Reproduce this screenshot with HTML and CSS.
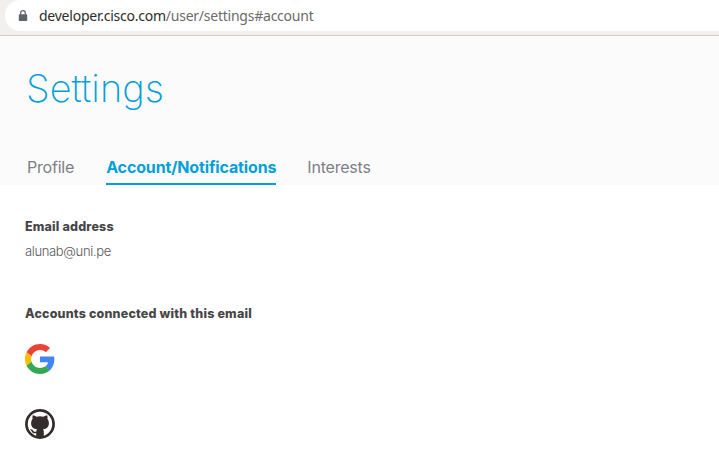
FILE: index.html
```html
<!DOCTYPE html>
<html lang="en">
<head>
<meta charset="utf-8">
<title>Settings</title>
<link rel="stylesheet" href="styles.css">
</head>
<body>
<div class="toolbar">
  <div class="address">
    <svg class="lock" width="10" height="12" viewBox="0 0 10 12"><path d="M1.5 4.3h7q.7 0 .7.7v5.3q0 .7-.7.7h-7q-.7 0-.7-.7V5q0-.7.7-.7z" fill="#5f6368"/><path d="M2.7 4.8V3a2.3 2.3 0 0 1 4.6 0v1.8" fill="none" stroke="#5f6368" stroke-width="1.2"/></svg>
    <span class="url"><span class="host">developer.cisco.com</span>/user/settings#account</span>
  </div>
</div>
<header class="header">
  <h1 class="title">Settings</h1>
  <nav class="tabs">
    <a class="tab">Profile</a>
    <a class="tab active">Account/Notifications</a>
    <a class="tab">Interests</a>
  </nav>
</header>
<main class="content">
  <h2 class="label">Email address</h2>
  <p class="email">alunab@uni.pe</p>
  <h2 class="label accounts-label">Accounts connected with this email</h2>
  <div class="accounts">
    <svg width="30" height="30" viewBox="0 0 48 48"><path fill="#EA4335" d="M24 9.5c3.54 0 6.71 1.22 9.21 3.6l6.85-6.85C35.9 2.38 30.47 0 24 0 14.62 0 6.51 5.38 2.56 13.22l7.98 6.19C12.43 13.72 17.74 9.5 24 9.5z"/><path fill="#4285F4" d="M46.98 24.55c0-1.57-.15-3.09-.38-4.55H24v9.02h12.94c-.58 2.96-2.26 5.48-4.78 7.18l7.73 6c4.51-4.18 7.09-10.36 7.09-17.65z"/><path fill="#FBBC05" d="M10.53 28.59A14.5 14.5 0 0 1 9.77 24c0-1.6.27-3.14.76-4.59l-7.98-6.19A24 24 0 0 0 0 24c0 3.88.92 7.54 2.56 10.78z"/><path fill="#34A853" d="M24 48c6.48 0 11.93-2.13 15.89-5.81l-7.73-6c-2.15 1.45-4.92 2.3-8.16 2.3-6.26 0-11.57-4.22-13.47-9.91l-7.98 6.19C6.51 42.62 14.62 48 24 48z"/></svg>
    <svg width="30" height="30" viewBox="0 0 30 30"><circle cx="15" cy="15" r="13.6" fill="#fff" stroke="#332d2d" stroke-width="2.7"/><path fill="#332d2d" d="M7.8 6.2q1.5-.1 3.900 1.500Q15 7 18.300 7.700q2.400-1.600 3.900-1.500.7 1.900.2 3.500 1.500 1.700 1.500 4.200c0 4.200-2.200 5.800-5.900 6.300q.8.900.8 2.600v5.500h-7.600v-4.200c-3 .6-3.900-.5-4.600-1.900-.4-.8-1-1.300-1.600-1.700 1.700-.5 2.700.4 3.400 1.400.7 1 1.700 1.100 2.900.7q.1-1.700.7-2.400c-3.700-.5-5.900-2.100-5.900-6.300q0-2.500 1.500-4.200-.5-1.600.2-3.500z"/></svg>
  </div>
</main>
</body>
</html>
```
FILE: styles.css
```css
* { box-sizing: border-box; }
body { margin: 0; height: 453px; overflow: hidden; background: #fff; font-family: Inter, "Liberation Sans", sans-serif; }
h1, h2, p { margin: 0; }
svg { display: block; }
.toolbar { height: 36px; background: #f1f0ef; border-bottom: 1px solid #cfcdcc; padding-left: 5px; }
.address { height: 31px; background: #fff; border-radius: 16px 0 0 16px; display: flex; align-items: center; padding-left: 13px; }
.lock { margin-right: 11px; }
.url { font: 14px/20px "Noto Sans", sans-serif; color: #6b6b6b; letter-spacing: -.24px; white-space: nowrap; }
.host { color: #2d2d2d; }
.header { height: 149px; background: #fbfbfb; padding: 28px 27px 0; }
.title { margin-left: -1px; font-size: 38px; line-height: 48px; font-weight: 250; letter-spacing: .05px; color: #049fd9; }
.tabs { display: flex; gap: 32px; margin-top: 38px; height: 35px; }
.tab { font-size: 16px; line-height: 34px; letter-spacing: -.2px; color: #7f7f86; white-space: nowrap; }
.active { margin-right: -1px; font-weight: 650; letter-spacing: -.14px; color: #049fd9; border-bottom: 2px solid #049fd9; }
.content { padding: 32px 25px 0; }
.label { font-size: 12.5px; line-height: 20px; font-weight: 800; letter-spacing: .18px; color: #464648; }
.email { margin-top: 4px; font-size: 13px; line-height: 20px; font-weight: 300; letter-spacing: -.35px; color: #58585b; }
.accounts-label { margin-top: 43px; }
.accounts { margin-top: 20px; display: flex; flex-direction: column; gap: 35px; }
```
